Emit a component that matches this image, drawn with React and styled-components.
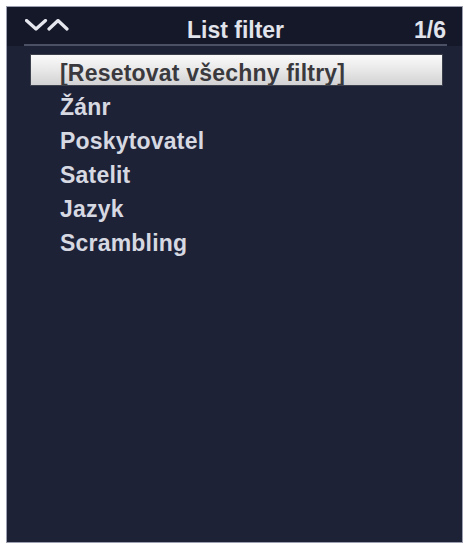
import React from "react";
import styled, { createGlobalStyle } from "styled-components";

const GlobalStyle = createGlobalStyle`
  html, body {
    margin: 0;
    padding: 0;
    background: #ffffff;
  }
  body {
    font-family: "Liberation Sans", Arial, sans-serif;
  }
`;

const filters = ["[Resetovat všechny filtry]", "Žánr", "Poskytovatel", "Satelit", "Jazyk", "Scrambling"];

const App = () => {
  return (
    <>
      <GlobalStyle />
      <Page>
        <Panel>
          <HeaderBar>
            <Header>
              <Arrows width="44" height="12" viewBox="0 0 44 12">
                <polyline points="1.5,1.5 11,10 20.5,1.5" />
                <polyline points="24,10 33,1.5 42,10" />
              </Arrows>
              <Title>List filter</Title>
              <Counter>1/6</Counter>
            </Header>
          </HeaderBar>
          <List>
            {filters.map((name, i) => (
              <Item key={name} $active={i === 0}>
                {name}
              </Item>
            ))}
          </List>
        </Panel>
      </Page>
    </>
  );
};

export default App;

const Page = styled.div`
  padding: 6px 2px 2px 6px;
`;

const Panel = styled.div`
  box-sizing: border-box;
  width: 457px;
  height: 537px;
  border: 1px solid #9c9fb0;
  background: #1e2236;
  display: flex;
  flex-direction: column;
`;

const HeaderBar = styled.div`
  background: #151829;
  padding: 0 15px 0 17px;
`;

const Header = styled.div`
  display: grid;
  grid-template-columns: 1fr auto 1fr;
  align-items: end;
  height: 36px;
  padding: 0 1px 1px 1px;
  border-bottom: 2px solid #4c5064;
  color: #e2e4ec;
  font-size: 23px;
  font-weight: bold;
  line-height: 26px;
`;

const Arrows = styled.svg`
  align-self: center;
  fill: none;
  stroke: #e6e7ee;
  stroke-width: 3.2;
  stroke-linecap: round;
  stroke-linejoin: round;
`;

const Title = styled.div`
  text-align: center;
`;

const Counter = styled.div`
  text-align: right;
`;

const List = styled.div`
  display: flex;
  flex-direction: column;
  padding: 8px 19px 0 23px;
`;

const Item = styled.div`
  box-sizing: border-box;
  height: ${(p) => (p.$active ? "32px" : "34px")};
  margin-bottom: ${(p) => (p.$active ? "4px" : "0")};
  padding: ${(p) => (p.$active ? "4px 0 0 29px" : "0 0 0 30px")};
  border: ${(p) => (p.$active ? "1px solid #3c3f4c" : "none")};
  background: ${(p) =>
    p.$active ? "linear-gradient(#fafafa, #e6e6e6 55%, #d2d2d4)" : "transparent"};
  color: ${(p) => (p.$active ? "#3a3a3e" : "#d6d8e2")};
  font-size: 23px;
  font-weight: bold;
  line-height: ${(p) => (p.$active ? "28px" : "34px")};
  letter-spacing: 0.2px;
  white-space: nowrap;
  overflow: hidden;
`;
